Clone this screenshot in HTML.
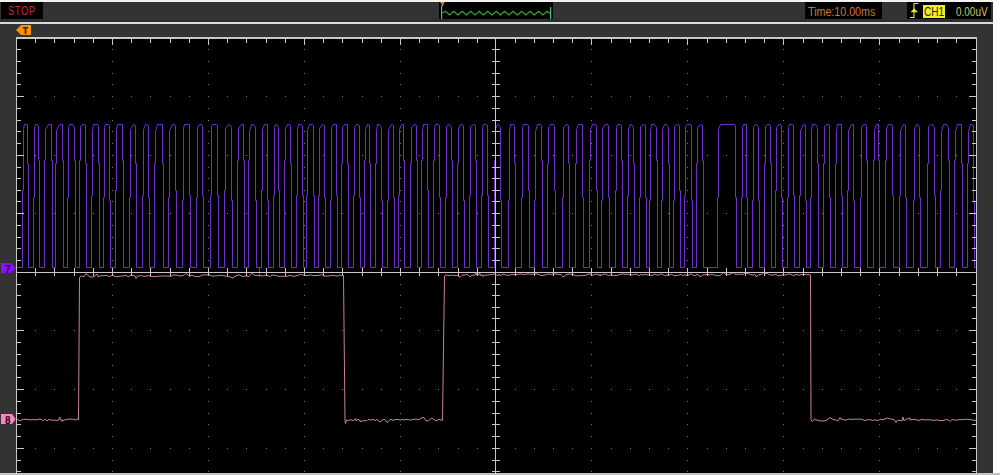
<!DOCTYPE html>
<html><head><meta charset="utf-8"><style>
html,body{margin:0;padding:0;width:1000px;height:475px;overflow:hidden;background:#333;}
.t{position:absolute;font-family:"Liberation Sans",sans-serif;font-size:11px;line-height:11px;white-space:nowrap;}
</style></head><body>
<svg width="1000" height="475" viewBox="0 0 1000 475" style="position:absolute;left:0;top:0">
<rect x="0" y="0" width="1000" height="475" fill="#333333"/>
<rect x="0" y="0" width="1000" height="2" fill="#f2f2f2"/>
<rect x="0" y="22" width="993" height="2" fill="#dadada"/>
<rect x="0" y="20" width="993" height="2" fill="#2c2c2c"/>
<rect x="993" y="0" width="7" height="475" fill="#ffffff"/>
<rect x="0" y="473" width="1000" height="2" fill="#c4c4c4"/>
<rect x="1" y="2" width="42" height="17" fill="#000"/>
<rect x="439" y="2" width="114" height="17" fill="#000"/>
<rect x="805" y="2" width="77" height="17" fill="#000"/>
<rect x="907" y="2" width="84" height="17" fill="#000"/>
<rect x="17" y="39" width="959" height="434" fill="#000"/>
<path d="M35 96h1v1h-1zM54 96h1v1h-1zM74 96h1v1h-1zM93 96h1v1h-1zM131 96h1v1h-1zM150 96h1v1h-1zM170 96h1v1h-1zM189 96h1v1h-1zM227 96h1v1h-1zM246 96h1v1h-1zM266 96h1v1h-1zM285 96h1v1h-1zM323 96h1v1h-1zM342 96h1v1h-1zM362 96h1v1h-1zM381 96h1v1h-1zM419 96h1v1h-1zM438 96h1v1h-1zM458 96h1v1h-1zM477 96h1v1h-1zM515 96h1v1h-1zM534 96h1v1h-1zM553 96h1v1h-1zM572 96h1v1h-1zM611 96h1v1h-1zM630 96h1v1h-1zM649 96h1v1h-1zM668 96h1v1h-1zM707 96h1v1h-1zM726 96h1v1h-1zM745 96h1v1h-1zM764 96h1v1h-1zM803 96h1v1h-1zM822 96h1v1h-1zM841 96h1v1h-1zM860 96h1v1h-1zM899 96h1v1h-1zM918 96h1v1h-1zM937 96h1v1h-1zM956 96h1v1h-1zM35 155h1v1h-1zM54 155h1v1h-1zM74 155h1v1h-1zM93 155h1v1h-1zM131 155h1v1h-1zM150 155h1v1h-1zM170 155h1v1h-1zM189 155h1v1h-1zM227 155h1v1h-1zM246 155h1v1h-1zM266 155h1v1h-1zM285 155h1v1h-1zM323 155h1v1h-1zM342 155h1v1h-1zM362 155h1v1h-1zM381 155h1v1h-1zM419 155h1v1h-1zM438 155h1v1h-1zM458 155h1v1h-1zM477 155h1v1h-1zM515 155h1v1h-1zM534 155h1v1h-1zM553 155h1v1h-1zM572 155h1v1h-1zM611 155h1v1h-1zM630 155h1v1h-1zM649 155h1v1h-1zM668 155h1v1h-1zM707 155h1v1h-1zM726 155h1v1h-1zM745 155h1v1h-1zM764 155h1v1h-1zM803 155h1v1h-1zM822 155h1v1h-1zM841 155h1v1h-1zM860 155h1v1h-1zM899 155h1v1h-1zM918 155h1v1h-1zM937 155h1v1h-1zM956 155h1v1h-1zM35 213h1v1h-1zM54 213h1v1h-1zM74 213h1v1h-1zM93 213h1v1h-1zM131 213h1v1h-1zM150 213h1v1h-1zM170 213h1v1h-1zM189 213h1v1h-1zM227 213h1v1h-1zM246 213h1v1h-1zM266 213h1v1h-1zM285 213h1v1h-1zM323 213h1v1h-1zM342 213h1v1h-1zM362 213h1v1h-1zM381 213h1v1h-1zM419 213h1v1h-1zM438 213h1v1h-1zM458 213h1v1h-1zM477 213h1v1h-1zM515 213h1v1h-1zM534 213h1v1h-1zM553 213h1v1h-1zM572 213h1v1h-1zM611 213h1v1h-1zM630 213h1v1h-1zM649 213h1v1h-1zM668 213h1v1h-1zM707 213h1v1h-1zM726 213h1v1h-1zM745 213h1v1h-1zM764 213h1v1h-1zM803 213h1v1h-1zM822 213h1v1h-1zM841 213h1v1h-1zM860 213h1v1h-1zM899 213h1v1h-1zM918 213h1v1h-1zM937 213h1v1h-1zM956 213h1v1h-1zM35 330h1v1h-1zM54 330h1v1h-1zM74 330h1v1h-1zM93 330h1v1h-1zM131 330h1v1h-1zM150 330h1v1h-1zM170 330h1v1h-1zM189 330h1v1h-1zM227 330h1v1h-1zM246 330h1v1h-1zM266 330h1v1h-1zM285 330h1v1h-1zM323 330h1v1h-1zM342 330h1v1h-1zM362 330h1v1h-1zM381 330h1v1h-1zM419 330h1v1h-1zM438 330h1v1h-1zM458 330h1v1h-1zM477 330h1v1h-1zM515 330h1v1h-1zM534 330h1v1h-1zM553 330h1v1h-1zM572 330h1v1h-1zM611 330h1v1h-1zM630 330h1v1h-1zM649 330h1v1h-1zM668 330h1v1h-1zM707 330h1v1h-1zM726 330h1v1h-1zM745 330h1v1h-1zM764 330h1v1h-1zM803 330h1v1h-1zM822 330h1v1h-1zM841 330h1v1h-1zM860 330h1v1h-1zM899 330h1v1h-1zM918 330h1v1h-1zM937 330h1v1h-1zM956 330h1v1h-1zM35 389h1v1h-1zM54 389h1v1h-1zM74 389h1v1h-1zM93 389h1v1h-1zM131 389h1v1h-1zM150 389h1v1h-1zM170 389h1v1h-1zM189 389h1v1h-1zM227 389h1v1h-1zM246 389h1v1h-1zM266 389h1v1h-1zM285 389h1v1h-1zM323 389h1v1h-1zM342 389h1v1h-1zM362 389h1v1h-1zM381 389h1v1h-1zM419 389h1v1h-1zM438 389h1v1h-1zM458 389h1v1h-1zM477 389h1v1h-1zM515 389h1v1h-1zM534 389h1v1h-1zM553 389h1v1h-1zM572 389h1v1h-1zM611 389h1v1h-1zM630 389h1v1h-1zM649 389h1v1h-1zM668 389h1v1h-1zM707 389h1v1h-1zM726 389h1v1h-1zM745 389h1v1h-1zM764 389h1v1h-1zM803 389h1v1h-1zM822 389h1v1h-1zM841 389h1v1h-1zM860 389h1v1h-1zM899 389h1v1h-1zM918 389h1v1h-1zM937 389h1v1h-1zM956 389h1v1h-1zM35 448h1v1h-1zM54 448h1v1h-1zM74 448h1v1h-1zM93 448h1v1h-1zM131 448h1v1h-1zM150 448h1v1h-1zM170 448h1v1h-1zM189 448h1v1h-1zM227 448h1v1h-1zM246 448h1v1h-1zM266 448h1v1h-1zM285 448h1v1h-1zM323 448h1v1h-1zM342 448h1v1h-1zM362 448h1v1h-1zM381 448h1v1h-1zM419 448h1v1h-1zM438 448h1v1h-1zM458 448h1v1h-1zM477 448h1v1h-1zM515 448h1v1h-1zM534 448h1v1h-1zM553 448h1v1h-1zM572 448h1v1h-1zM611 448h1v1h-1zM630 448h1v1h-1zM649 448h1v1h-1zM668 448h1v1h-1zM707 448h1v1h-1zM726 448h1v1h-1zM745 448h1v1h-1zM764 448h1v1h-1zM803 448h1v1h-1zM822 448h1v1h-1zM841 448h1v1h-1zM860 448h1v1h-1zM899 448h1v1h-1zM918 448h1v1h-1zM937 448h1v1h-1zM956 448h1v1h-1zM112 49h1v1h-1zM112 61h1v1h-1zM112 73h1v1h-1zM112 84h1v1h-1zM112 108h1v1h-1zM112 120h1v1h-1zM112 131h1v1h-1zM112 143h1v1h-1zM112 167h1v1h-1zM112 178h1v1h-1zM112 190h1v1h-1zM112 201h1v1h-1zM112 225h1v1h-1zM112 237h1v1h-1zM112 248h1v1h-1zM112 260h1v1h-1zM112 284h1v1h-1zM112 295h1v1h-1zM112 307h1v1h-1zM112 318h1v1h-1zM112 342h1v1h-1zM112 354h1v1h-1zM112 365h1v1h-1zM112 377h1v1h-1zM112 401h1v1h-1zM112 413h1v1h-1zM112 424h1v1h-1zM112 436h1v1h-1zM112 460h1v1h-1zM112 471h1v1h-1zM112 96h1v1h-1zM112 155h1v1h-1zM112 213h1v1h-1zM112 330h1v1h-1zM112 389h1v1h-1zM112 448h1v1h-1zM208 49h1v1h-1zM208 61h1v1h-1zM208 73h1v1h-1zM208 84h1v1h-1zM208 108h1v1h-1zM208 120h1v1h-1zM208 131h1v1h-1zM208 143h1v1h-1zM208 167h1v1h-1zM208 178h1v1h-1zM208 190h1v1h-1zM208 201h1v1h-1zM208 225h1v1h-1zM208 237h1v1h-1zM208 248h1v1h-1zM208 260h1v1h-1zM208 284h1v1h-1zM208 295h1v1h-1zM208 307h1v1h-1zM208 318h1v1h-1zM208 342h1v1h-1zM208 354h1v1h-1zM208 365h1v1h-1zM208 377h1v1h-1zM208 401h1v1h-1zM208 413h1v1h-1zM208 424h1v1h-1zM208 436h1v1h-1zM208 460h1v1h-1zM208 471h1v1h-1zM208 96h1v1h-1zM208 155h1v1h-1zM208 213h1v1h-1zM208 330h1v1h-1zM208 389h1v1h-1zM208 448h1v1h-1zM304 49h1v1h-1zM304 61h1v1h-1zM304 73h1v1h-1zM304 84h1v1h-1zM304 108h1v1h-1zM304 120h1v1h-1zM304 131h1v1h-1zM304 143h1v1h-1zM304 167h1v1h-1zM304 178h1v1h-1zM304 190h1v1h-1zM304 201h1v1h-1zM304 225h1v1h-1zM304 237h1v1h-1zM304 248h1v1h-1zM304 260h1v1h-1zM304 284h1v1h-1zM304 295h1v1h-1zM304 307h1v1h-1zM304 318h1v1h-1zM304 342h1v1h-1zM304 354h1v1h-1zM304 365h1v1h-1zM304 377h1v1h-1zM304 401h1v1h-1zM304 413h1v1h-1zM304 424h1v1h-1zM304 436h1v1h-1zM304 460h1v1h-1zM304 471h1v1h-1zM304 96h1v1h-1zM304 155h1v1h-1zM304 213h1v1h-1zM304 330h1v1h-1zM304 389h1v1h-1zM304 448h1v1h-1zM400 49h1v1h-1zM400 61h1v1h-1zM400 73h1v1h-1zM400 84h1v1h-1zM400 108h1v1h-1zM400 120h1v1h-1zM400 131h1v1h-1zM400 143h1v1h-1zM400 167h1v1h-1zM400 178h1v1h-1zM400 190h1v1h-1zM400 201h1v1h-1zM400 225h1v1h-1zM400 237h1v1h-1zM400 248h1v1h-1zM400 260h1v1h-1zM400 284h1v1h-1zM400 295h1v1h-1zM400 307h1v1h-1zM400 318h1v1h-1zM400 342h1v1h-1zM400 354h1v1h-1zM400 365h1v1h-1zM400 377h1v1h-1zM400 401h1v1h-1zM400 413h1v1h-1zM400 424h1v1h-1zM400 436h1v1h-1zM400 460h1v1h-1zM400 471h1v1h-1zM400 96h1v1h-1zM400 155h1v1h-1zM400 213h1v1h-1zM400 330h1v1h-1zM400 389h1v1h-1zM400 448h1v1h-1zM591 49h1v1h-1zM591 61h1v1h-1zM591 73h1v1h-1zM591 84h1v1h-1zM591 108h1v1h-1zM591 120h1v1h-1zM591 131h1v1h-1zM591 143h1v1h-1zM591 167h1v1h-1zM591 178h1v1h-1zM591 190h1v1h-1zM591 201h1v1h-1zM591 225h1v1h-1zM591 237h1v1h-1zM591 248h1v1h-1zM591 260h1v1h-1zM591 284h1v1h-1zM591 295h1v1h-1zM591 307h1v1h-1zM591 318h1v1h-1zM591 342h1v1h-1zM591 354h1v1h-1zM591 365h1v1h-1zM591 377h1v1h-1zM591 401h1v1h-1zM591 413h1v1h-1zM591 424h1v1h-1zM591 436h1v1h-1zM591 460h1v1h-1zM591 471h1v1h-1zM591 96h1v1h-1zM591 155h1v1h-1zM591 213h1v1h-1zM591 330h1v1h-1zM591 389h1v1h-1zM591 448h1v1h-1zM687 49h1v1h-1zM687 61h1v1h-1zM687 73h1v1h-1zM687 84h1v1h-1zM687 108h1v1h-1zM687 120h1v1h-1zM687 131h1v1h-1zM687 143h1v1h-1zM687 167h1v1h-1zM687 178h1v1h-1zM687 190h1v1h-1zM687 201h1v1h-1zM687 225h1v1h-1zM687 237h1v1h-1zM687 248h1v1h-1zM687 260h1v1h-1zM687 284h1v1h-1zM687 295h1v1h-1zM687 307h1v1h-1zM687 318h1v1h-1zM687 342h1v1h-1zM687 354h1v1h-1zM687 365h1v1h-1zM687 377h1v1h-1zM687 401h1v1h-1zM687 413h1v1h-1zM687 424h1v1h-1zM687 436h1v1h-1zM687 460h1v1h-1zM687 471h1v1h-1zM687 96h1v1h-1zM687 155h1v1h-1zM687 213h1v1h-1zM687 330h1v1h-1zM687 389h1v1h-1zM687 448h1v1h-1zM783 49h1v1h-1zM783 61h1v1h-1zM783 73h1v1h-1zM783 84h1v1h-1zM783 108h1v1h-1zM783 120h1v1h-1zM783 131h1v1h-1zM783 143h1v1h-1zM783 167h1v1h-1zM783 178h1v1h-1zM783 190h1v1h-1zM783 201h1v1h-1zM783 225h1v1h-1zM783 237h1v1h-1zM783 248h1v1h-1zM783 260h1v1h-1zM783 284h1v1h-1zM783 295h1v1h-1zM783 307h1v1h-1zM783 318h1v1h-1zM783 342h1v1h-1zM783 354h1v1h-1zM783 365h1v1h-1zM783 377h1v1h-1zM783 401h1v1h-1zM783 413h1v1h-1zM783 424h1v1h-1zM783 436h1v1h-1zM783 460h1v1h-1zM783 471h1v1h-1zM783 96h1v1h-1zM783 155h1v1h-1zM783 213h1v1h-1zM783 330h1v1h-1zM783 389h1v1h-1zM783 448h1v1h-1zM879 49h1v1h-1zM879 61h1v1h-1zM879 73h1v1h-1zM879 84h1v1h-1zM879 108h1v1h-1zM879 120h1v1h-1zM879 131h1v1h-1zM879 143h1v1h-1zM879 167h1v1h-1zM879 178h1v1h-1zM879 190h1v1h-1zM879 201h1v1h-1zM879 225h1v1h-1zM879 237h1v1h-1zM879 248h1v1h-1zM879 260h1v1h-1zM879 284h1v1h-1zM879 295h1v1h-1zM879 307h1v1h-1zM879 318h1v1h-1zM879 342h1v1h-1zM879 354h1v1h-1zM879 365h1v1h-1zM879 377h1v1h-1zM879 401h1v1h-1zM879 413h1v1h-1zM879 424h1v1h-1zM879 436h1v1h-1zM879 460h1v1h-1zM879 471h1v1h-1zM879 96h1v1h-1zM879 155h1v1h-1zM879 213h1v1h-1zM879 330h1v1h-1zM879 389h1v1h-1zM879 448h1v1h-1z" fill="#7a7a7a"/>
<path d="M17 267.5H22.5V190.5H23.5V129.5L24.5 124.5H27.5L27.5 124.5V163.5H28.5V267.5H33.5V197.5H34.5V128.5L35.5 124.5H37.5L38.5 126.0V160.5H39.5V267.5H44.5V160.5H45.5V129.5L48.5 124.5H51.5L51.5 124.5V160.5H52.5V267.5H55.5V163.5H56.5V130.5L59.5 124.5H62.5L62.5 124.5V160.5H63.5V267.5H67.5V197.5H68.5V127.5L69.5 124.5H72.5L74.5 127.5V160.5H75.5V267.5H79.5V160.5H80.5V126.5L82.5 124.5H84.5L85.5 126.0V163.5H86.5V267.5H91.5V195.5H92.5V130.5L93.5 124.5H97.5L98.5 126.0V163.5H99.5V267.5H103.5V197.5H104.5V127.5L105.5 124.5H108.5L109.5 126.0V200.5H110.5V267.5H115.5V190.5H116.5V130.5L117.5 124.5H122.5L122.5 124.5V160.5H123.5V267.5H129.5V197.5H130.5V129.5L133.5 124.5H134.5L135.5 126.0V163.5H136.5V267.5H142.5V195.5H143.5V129.5L145.5 124.5H147.5L148.5 126.0V197.5H149.5V267.5H154.5V163.5H155.5V131.5L157.5 124.5H162.5L162.5 124.5V163.5H163.5V267.5H168.5V197.5H169.5V130.5L172.5 124.5H174.5L175.5 126.0V190.5H176.5V267.5H182.5V200.5H183.5V128.5L184.5 124.5H189.5L189.5 124.5V195.5H190.5V267.5H196.5V197.5H197.5V127.5L199.5 124.5H201.5L202.5 126.0V195.5H203.5V267.5H210.5V195.5H211.5V126.5L212.5 124.5H216.5L217.5 126.0V195.5H218.5V267.5H224.5V190.5H225.5V128.5L228.5 124.5H229.5L231.5 127.5V200.5H232.5V267.5H237.5V160.5H238.5V128.5L241.5 124.5H243.5L243.5 124.5V160.5H244.5V267.5H248.5V160.5H249.5V131.5L251.5 124.5H253.5L255.5 127.5V200.5H256.5V267.5H261.5V190.5H262.5V129.5L264.5 124.5H267.5L267.5 124.5V200.5H268.5V267.5H273.5V195.5H274.5V127.5L275.5 124.5H276.5L278.5 127.5V190.5H279.5V267.5H284.5V160.5H285.5V128.5L287.5 124.5H289.5L290.5 126.0V163.5H291.5V267.5H296.5V195.5H297.5V129.5L298.5 124.5H301.5L302.5 126.0V195.5H303.5V267.5H306.5V195.5H307.5V130.5L309.5 124.5H312.5L313.5 126.0V195.5H314.5V267.5H318.5V195.5H319.5V128.5L322.5 124.5H323.5L324.5 126.0V197.5H325.5V267.5H330.5V200.5H331.5V127.5L333.5 124.5H336.5L336.5 124.5V195.5H337.5V267.5H341.5V163.5H342.5V127.5L344.5 124.5H347.5L347.5 124.5V163.5H348.5V267.5H353.5V195.5H354.5V127.5L356.5 124.5H358.5L359.5 126.0V197.5H360.5V267.5H364.5V160.5H365.5V129.5L367.5 124.5H368.5L369.5 126.0V163.5H370.5V267.5H375.5V163.5H376.5V130.5L377.5 124.5H379.5L381.5 127.5V200.5H382.5V267.5H387.5V200.5H388.5V129.5L391.5 124.5H392.5L393.5 126.0V197.5H394.5V267.5H398.5V195.5H399.5V129.5L401.5 124.5H403.5L403.5 124.5V160.5H404.5V267.5H410.5V163.5H411.5V127.5L414.5 124.5H415.5L416.5 126.0V160.5H417.5V267.5H421.5V160.5H422.5V130.5L423.5 124.5H427.5L427.5 124.5V190.5H428.5V267.5H433.5V160.5H434.5V127.5L435.5 124.5H438.5L439.5 126.0V197.5H440.5V267.5H445.5V197.5H446.5V126.5L448.5 124.5H449.5L451.5 127.5V160.5H452.5V267.5H457.5V163.5H458.5V128.5L460.5 124.5H462.5L463.5 126.0V200.5H464.5V267.5H469.5V195.5H470.5V126.5L473.5 124.5H474.5L475.5 126.0V160.5H476.5V267.5H481.5V195.5H482.5V128.5L483.5 124.5H486.5L487.5 126.0V195.5H488.5V267.5H494.5V160.5H495.5V128.5L497.5 124.5H498.5L500.5 127.5V200.5H501.5V267.5H508.5V200.5H509.5V130.5L510.5 124.5H513.5L514.5 126.0V163.5H515.5V267.5H521.5V197.5H522.5V127.5L523.5 124.5H527.5L528.5 126.0V190.5H529.5V267.5H534.5V200.5H535.5V131.5L537.5 124.5H540.5L541.5 126.0V160.5H542.5V267.5H547.5V163.5H548.5V127.5L550.5 124.5H553.5L554.5 126.0V190.5H555.5V267.5H562.5V197.5H563.5V127.5L566.5 124.5H567.5L568.5 126.0V163.5H569.5V267.5H575.5V163.5H576.5V129.5L578.5 124.5H582.5L582.5 124.5V197.5H583.5V267.5H589.5V160.5H590.5V129.5L592.5 124.5H595.5L596.5 126.0V190.5H597.5V267.5H601.5V200.5H602.5V128.5L605.5 124.5H607.5L608.5 126.0V197.5H609.5V267.5H615.5V190.5H616.5V127.5L617.5 124.5H620.5L621.5 126.0V160.5H622.5V267.5H627.5V195.5H628.5V128.5L630.5 124.5H631.5L633.5 127.5V163.5H634.5V267.5H639.5V197.5H640.5V126.5L643.5 124.5H644.5L645.5 126.0V197.5H646.5V267.5H649.5V200.5H650.5V131.5L651.5 124.5H654.5L656.5 127.5V160.5H657.5V267.5H661.5V200.5H662.5V129.5L664.5 124.5H666.5L668.5 127.5V163.5H669.5V267.5H673.5V200.5H674.5V126.5L677.5 124.5H678.5L679.5 126.0V190.5H680.5V267.5H684.5V195.5H685.5V126.5L687.5 124.5H690.5L691.5 126.0V200.5H692.5V267.5H696.5V163.5H697.5V127.5L700.5 124.5H701.5L702.5 126.0V160.5H703.5V267.5H717.5V197.5H718.5V129.5L720.5 124.5H734.5L735.5 126.0V197.5H736.5V267.5H741.5V197.5H742.5V127.5L743.5 124.5H746.5L746.5 124.5V197.5H747.5V267.5H752.5V200.5H753.5V126.5L755.5 124.5H756.5L758.5 127.5V200.5H759.5V267.5H764.5V163.5H765.5V126.5L767.5 124.5H769.5L770.5 126.0V163.5H771.5V267.5H775.5V190.5H776.5V127.5L778.5 124.5H780.5L781.5 126.0V197.5H782.5V267.5H787.5V197.5H788.5V127.5L789.5 124.5H792.5L793.5 126.0V195.5H794.5V267.5H799.5V195.5H800.5V130.5L803.5 124.5H804.5L805.5 126.0V200.5H806.5V267.5H810.5V197.5H811.5V130.5L812.5 124.5H815.5L817.5 127.5V163.5H818.5V267.5H823.5V163.5H824.5V126.5L826.5 124.5H828.5L829.5 126.0V197.5H830.5V267.5H835.5V163.5H836.5V130.5L837.5 124.5H841.5L841.5 124.5V195.5H842.5V267.5H847.5V190.5H848.5V130.5L851.5 124.5H853.5L853.5 124.5V200.5H854.5V267.5H860.5V197.5H861.5V127.5L863.5 124.5H865.5L866.5 126.0V160.5H867.5V267.5H873.5V160.5H874.5V130.5L876.5 124.5H878.5L878.5 124.5V160.5H879.5V267.5H885.5V160.5H886.5V128.5L888.5 124.5H891.5L892.5 126.0V195.5H893.5V267.5H899.5V195.5H900.5V130.5L903.5 124.5H904.5L905.5 126.0V197.5H906.5V267.5H913.5V200.5H914.5V128.5L916.5 124.5H917.5L919.5 127.5V197.5H920.5V267.5H927.5V163.5H928.5V126.5L931.5 124.5H932.5L934.5 127.5V195.5H935.5V267.5H940.5V190.5H941.5V131.5L943.5 124.5H946.5L948.5 127.5V160.5H949.5V267.5H954.5V160.5H955.5V131.5L957.5 124.5H961.5L961.5 124.5V163.5H962.5V267.5H967.5V163.5H968.5V131.5L970.5 124.5H972.5L973.5 126.0V200.5H974.5V267.5H976M259.5 267.5V277" fill="none" stroke="#6e30c8" stroke-width="1"/>
<path d="M17.0 419.3 L20.0 420.9 L23.0 419.3 L27.0 419.3 L30.0 419.8 L33.0 419.6 L37.0 419.7 L40.0 419.0 L42.0 419.6 L43.0 420.8 L45.0 419.2 L47.0 420.8 L49.0 419.3 L52.0 420.4 L54.0 420.1 L57.0 420.4 L58.0 420.6 L60.0 417.0 L60.0 419.1 L61.0 420.6 L62.0 419.4 L62.0 421.5 L64.0 419.9 L66.0 419.8 L68.0 419.1 L72.0 419.2 L74.0 419.4 L76.0 420.1 L78.0 418.5 L78.5 420.0 L79.5 278.0 L80.5 276.3 L82.0 276.1 L84.0 276.7 L86.0 273.6 L90.0 277.0 L93.0 277.0 L94.0 276.4 L97.0 274.1 L98.0 276.7 L101.0 275.7 L103.0 275.7 L107.0 275.3 L109.0 276.7 L110.0 276.5 L112.0 275.1 L116.0 276.8 L120.0 276.2 L124.0 275.9 L126.0 275.0 L128.0 276.9 L131.0 275.1 L133.0 275.4 L135.0 275.9 L136.0 278.5 L138.0 275.5 L139.0 276.6 L141.0 275.1 L142.0 276.2 L143.0 276.0 L145.0 276.4 L148.0 275.6 L151.0 276.4 L155.0 276.6 L159.0 276.2 L163.0 275.9 L166.0 276.0 L167.0 276.1 L171.0 276.3 L173.0 275.0 L177.0 275.1 L180.0 276.1 L184.0 275.4 L186.0 273.4 L190.0 276.7 L191.0 275.0 L195.0 276.5 L197.0 276.4 L199.0 276.8 L202.0 275.0 L206.0 274.9 L210.0 275.0 L212.0 276.1 L216.0 275.9 L217.0 275.8 L221.0 275.2 L224.0 275.8 L227.0 276.3 L230.0 276.7 L233.0 278.3 L234.0 276.7 L237.0 275.5 L239.0 274.9 L243.0 276.6 L245.0 276.0 L247.0 276.1 L249.0 276.5 L252.0 273.2 L255.0 275.5 L259.0 275.4 L261.0 275.4 L263.0 276.4 L264.0 275.1 L265.0 275.3 L267.0 275.5 L270.0 276.5 L272.0 275.2 L273.0 275.2 L275.0 275.2 L278.0 276.2 L281.0 276.3 L285.0 276.4 L288.0 276.1 L289.0 275.4 L292.0 275.9 L294.0 276.4 L297.0 275.6 L299.0 275.1 L300.0 274.1 L303.0 275.1 L307.0 275.6 L311.0 274.9 L313.0 275.6 L316.0 275.5 L318.0 275.5 L320.0 275.0 L322.0 274.7 L324.0 276.2 L326.0 276.0 L329.0 276.0 L331.0 275.2 L332.0 275.7 L334.0 275.5 L338.0 276.2 L339.0 275.0 L342.0 275.4 L343.5 275.5 L345.0 420.5 L345.5 423.5 L346.5 420.0 L348.0 420.7 L349.0 419.9 L352.0 420.0 L353.0 420.9 L356.0 418.5 L356.0 420.9 L358.0 419.4 L360.0 420.4 L360.0 421.5 L364.0 420.7 L367.0 420.6 L368.0 419.5 L369.0 419.6 L371.0 420.1 L374.0 419.2 L375.0 420.9 L377.0 419.4 L380.0 422.0 L383.0 419.6 L385.0 419.5 L387.0 422.5 L391.0 419.1 L393.0 420.3 L396.0 419.5 L399.0 419.5 L400.0 420.4 L402.0 419.4 L404.0 420.0 L406.0 419.4 L408.0 419.4 L410.0 420.2 L413.0 419.4 L416.0 419.1 L419.0 419.8 L421.0 418.0 L424.0 417.5 L426.0 420.8 L428.0 421.0 L430.0 419.4 L432.0 418.0 L433.0 419.1 L436.0 420.8 L437.0 420.7 L439.0 419.2 L440.0 419.7 L442.5 420.5 L444.5 276.0 L446.0 274.8 L447.0 275.3 L450.0 275.4 L453.0 275.2 L455.0 275.6 L457.0 275.3 L460.0 277.3 L462.0 275.3 L463.0 274.7 L464.0 275.3 L467.0 274.3 L470.0 276.8 L472.0 275.2 L475.0 275.1 L476.0 272.8 L477.0 275.7 L480.0 273.3 L480.0 275.6 L483.0 274.8 L483.0 276.6 L484.0 275.3 L488.0 275.0 L490.0 274.7 L493.0 274.2 L495.0 273.9 L496.0 274.9 L498.0 275.6 L499.0 274.0 L500.0 275.8 L503.0 274.1 L506.0 275.1 L510.0 275.3 L511.0 274.4 L513.0 274.5 L517.0 274.7 L519.0 274.1 L522.0 273.9 L524.0 274.8 L526.0 274.0 L529.0 274.0 L532.0 274.3 L535.0 273.9 L537.0 273.9 L540.0 275.0 L541.0 275.5 L544.0 275.3 L548.0 274.0 L551.0 274.5 L552.0 274.1 L554.0 273.9 L558.0 274.2 L559.0 274.6 L561.0 274.4 L563.0 277.3 L566.0 274.6 L569.0 274.1 L572.0 274.1 L576.0 275.8 L580.0 275.7 L582.0 275.6 L585.0 275.5 L587.0 274.6 L590.0 273.8 L592.0 275.4 L595.0 274.5 L597.0 273.9 L599.0 275.6 L600.0 273.8 L600.0 275.7 L604.0 274.1 L606.0 274.1 L607.0 274.8 L609.0 275.5 L610.0 274.8 L611.0 275.1 L612.0 275.0 L614.0 275.5 L617.0 275.5 L620.0 274.2 L623.0 274.1 L625.0 274.3 L629.0 274.2 L632.0 275.1 L636.0 274.0 L639.0 275.5 L641.0 274.4 L643.0 275.1 L646.0 274.2 L647.0 274.8 L649.0 275.0 L652.0 275.4 L655.0 274.1 L658.0 275.4 L661.0 273.9 L665.0 275.6 L667.0 274.8 L668.0 275.6 L672.0 274.1 L673.0 275.3 L674.0 275.8 L677.0 275.4 L679.0 275.2 L681.0 274.5 L683.0 275.6 L685.0 274.7 L687.0 275.6 L689.0 275.0 L691.0 273.9 L693.0 275.1 L695.0 275.6 L697.0 274.3 L700.0 276.0 L700.0 276.8 L703.0 275.0 L704.0 274.9 L707.0 274.5 L710.0 275.0 L712.0 274.0 L714.0 275.3 L715.0 274.8 L717.0 275.8 L720.0 275.6 L724.0 272.3 L726.0 275.0 L729.0 274.5 L730.0 274.3 L734.0 272.3 L735.0 274.4 L738.0 274.2 L741.0 274.1 L743.0 274.7 L745.0 272.8 L749.0 274.0 L753.0 275.1 L755.0 274.3 L756.0 276.8 L759.0 274.7 L762.0 274.3 L763.0 272.3 L766.0 274.1 L767.0 272.8 L769.0 274.8 L773.0 275.1 L776.0 274.4 L778.0 275.8 L782.0 275.2 L783.0 274.7 L786.0 275.1 L788.0 274.0 L790.0 274.0 L794.0 275.7 L796.0 274.3 L799.0 275.2 L802.0 274.4 L804.0 274.8 L806.0 274.3 L810.5 275.0 L811.0 420.0 L812.5 421.5 L814.0 419.3 L816.0 419.8 L819.0 420.8 L823.0 421.0 L826.0 420.7 L830.0 417.5 L833.0 419.5 L835.0 419.8 L838.0 420.8 L840.0 417.5 L841.0 419.3 L843.0 419.1 L845.0 420.3 L849.0 419.1 L852.0 419.4 L855.0 419.1 L859.0 419.2 L861.0 419.1 L865.0 420.5 L869.0 419.2 L870.0 420.3 L872.0 419.8 L873.0 420.9 L874.0 419.7 L876.0 420.2 L879.0 420.2 L880.0 419.1 L883.0 419.7 L887.0 418.0 L891.0 419.2 L893.0 419.0 L895.0 420.5 L896.0 422.5 L897.0 420.6 L899.0 420.2 L902.0 420.9 L903.0 417.0 L904.0 420.9 L906.0 419.2 L910.0 418.0 L910.0 420.0 L914.0 419.2 L916.0 419.8 L919.0 420.5 L922.0 419.1 L924.0 419.9 L927.0 419.8 L931.0 419.9 L934.0 420.4 L937.0 419.7 L939.0 420.7 L942.0 420.5 L944.0 420.4 L946.0 419.3 L949.0 420.4 L950.0 421.5 L952.0 419.6 L956.0 420.2 L960.0 419.5 L962.0 419.7 L964.0 419.4 L968.0 419.3 L972.0 419.8 L974.0 420.5 L976.0 420.0" fill="none" stroke="#c8809a" stroke-width="1"/>
<rect x="16" y="37" width="1" height="436" fill="#c8c8c8"/>
<rect x="976" y="37" width="1" height="436" fill="#c8c8c8"/>
<rect x="16" y="37" width="961" height="2" fill="#c8c8c8"/>
<rect x="16" y="272" width="960" height="1" fill="#c8c8c8"/>
<rect x="495" y="37" width="1" height="436" fill="#c8c8c8"/>
<path d="M35 39h1v4h-1zM54 39h1v4h-1zM74 39h1v4h-1zM93 39h1v4h-1zM131 39h1v4h-1zM150 39h1v4h-1zM170 39h1v4h-1zM189 39h1v4h-1zM227 39h1v4h-1zM246 39h1v4h-1zM266 39h1v4h-1zM285 39h1v4h-1zM323 39h1v4h-1zM342 39h1v4h-1zM362 39h1v4h-1zM381 39h1v4h-1zM419 39h1v4h-1zM438 39h1v4h-1zM458 39h1v4h-1zM477 39h1v4h-1zM515 39h1v4h-1zM534 39h1v4h-1zM553 39h1v4h-1zM572 39h1v4h-1zM611 39h1v4h-1zM630 39h1v4h-1zM649 39h1v4h-1zM668 39h1v4h-1zM707 39h1v4h-1zM726 39h1v4h-1zM745 39h1v4h-1zM764 39h1v4h-1zM803 39h1v4h-1zM822 39h1v4h-1zM841 39h1v4h-1zM860 39h1v4h-1zM899 39h1v4h-1zM918 39h1v4h-1zM937 39h1v4h-1zM956 39h1v4h-1zM112 39h1v6h-1zM208 39h1v6h-1zM304 39h1v6h-1zM400 39h1v6h-1zM591 39h1v6h-1zM687 39h1v6h-1zM783 39h1v6h-1zM879 39h1v6h-1zM17 49h4v1h-4zM972 49h4v1h-4zM17 61h4v1h-4zM972 61h4v1h-4zM17 73h4v1h-4zM972 73h4v1h-4zM17 84h4v1h-4zM972 84h4v1h-4zM17 108h4v1h-4zM972 108h4v1h-4zM17 120h4v1h-4zM972 120h4v1h-4zM17 131h4v1h-4zM972 131h4v1h-4zM17 143h4v1h-4zM972 143h4v1h-4zM17 167h4v1h-4zM972 167h4v1h-4zM17 178h4v1h-4zM972 178h4v1h-4zM17 190h4v1h-4zM972 190h4v1h-4zM17 201h4v1h-4zM972 201h4v1h-4zM17 225h4v1h-4zM972 225h4v1h-4zM17 237h4v1h-4zM972 237h4v1h-4zM17 248h4v1h-4zM972 248h4v1h-4zM17 260h4v1h-4zM972 260h4v1h-4zM17 284h4v1h-4zM972 284h4v1h-4zM17 295h4v1h-4zM972 295h4v1h-4zM17 307h4v1h-4zM972 307h4v1h-4zM17 318h4v1h-4zM972 318h4v1h-4zM17 342h4v1h-4zM972 342h4v1h-4zM17 354h4v1h-4zM972 354h4v1h-4zM17 365h4v1h-4zM972 365h4v1h-4zM17 377h4v1h-4zM972 377h4v1h-4zM17 401h4v1h-4zM972 401h4v1h-4zM17 413h4v1h-4zM972 413h4v1h-4zM17 424h4v1h-4zM972 424h4v1h-4zM17 436h4v1h-4zM972 436h4v1h-4zM17 460h4v1h-4zM972 460h4v1h-4zM17 471h4v1h-4zM972 471h4v1h-4zM17 96h7v1h-7zM969 96h7v1h-7zM17 155h7v1h-7zM969 155h7v1h-7zM17 213h7v1h-7zM969 213h7v1h-7zM17 330h7v1h-7zM969 330h7v1h-7zM17 389h7v1h-7zM969 389h7v1h-7zM17 448h7v1h-7zM969 448h7v1h-7zM35 268h1v8h-1zM54 268h1v8h-1zM74 268h1v8h-1zM93 268h1v8h-1zM131 268h1v8h-1zM150 268h1v8h-1zM170 268h1v8h-1zM189 268h1v8h-1zM227 268h1v8h-1zM246 268h1v8h-1zM266 268h1v8h-1zM285 268h1v8h-1zM323 268h1v8h-1zM342 268h1v8h-1zM362 268h1v8h-1zM381 268h1v8h-1zM419 268h1v8h-1zM438 268h1v8h-1zM458 268h1v8h-1zM477 268h1v8h-1zM515 268h1v8h-1zM534 268h1v8h-1zM553 268h1v8h-1zM572 268h1v8h-1zM611 268h1v8h-1zM630 268h1v8h-1zM649 268h1v8h-1zM668 268h1v8h-1zM707 268h1v8h-1zM726 268h1v8h-1zM745 268h1v8h-1zM764 268h1v8h-1zM803 268h1v8h-1zM822 268h1v8h-1zM841 268h1v8h-1zM860 268h1v8h-1zM899 268h1v8h-1zM918 268h1v8h-1zM937 268h1v8h-1zM956 268h1v8h-1zM112 268h1v8h-1zM208 268h1v8h-1zM304 268h1v8h-1zM400 268h1v8h-1zM591 268h1v8h-1zM687 268h1v8h-1zM783 268h1v8h-1zM879 268h1v8h-1zM492 49h8v1h-8zM492 61h8v1h-8zM492 73h8v1h-8zM492 84h8v1h-8zM492 108h8v1h-8zM492 120h8v1h-8zM492 131h8v1h-8zM492 143h8v1h-8zM492 167h8v1h-8zM492 178h8v1h-8zM492 190h8v1h-8zM492 201h8v1h-8zM492 225h8v1h-8zM492 237h8v1h-8zM492 248h8v1h-8zM492 260h8v1h-8zM492 284h8v1h-8zM492 295h8v1h-8zM492 307h8v1h-8zM492 318h8v1h-8zM492 342h8v1h-8zM492 354h8v1h-8zM492 365h8v1h-8zM492 377h8v1h-8zM492 401h8v1h-8zM492 413h8v1h-8zM492 424h8v1h-8zM492 436h8v1h-8zM492 460h8v1h-8zM492 471h8v1h-8zM492 96h8v1h-8zM492 155h8v1h-8zM492 213h8v1h-8zM492 330h8v1h-8zM492 389h8v1h-8zM492 448h8v1h-8z" fill="#c8c8c8"/>
<!-- zigzag panel -->
<path d="M442.5 13L445.3 11.3L449.5 15L453.8 11.3L458.0 15L462.3 11.3L466.5 15L470.7 11.3L475.0 15L479.2 11.3L483.5 15L487.7 11.3L491.9 15L496.2 11.3L500.4 15L504.7 11.3L508.9 15L513.1 11.3L517.4 15L521.6 11.3L525.9 15L530.1 11.3L534.3 15L538.6 11.3L542.8 15L547.1 11.3L550 13.5" fill="none" stroke="#34a834" stroke-width="1.1"/>
<rect x="441" y="6" width="1.2" height="13" fill="#3cbca0"/>
<rect x="550" y="7" width="1.2" height="12" fill="#3cbca0"/>
<path d="M440 2h5l-1.6 2v2h-1.8v-2z" fill="#d08428"/>
<!-- trigger icon -->
<path d="M910 17.5H914V3.5H918.5" fill="none" stroke="#e0e040" stroke-width="1.1"/>
<path d="M910.5 12.3L914 8.3L918 12.3z" fill="#e6e63c"/>
<rect x="923" y="5" width="22" height="13" fill="#f0f020"/>
<!-- T marker -->
<path d="M16 30L21 25H31V35H21z" fill="#f89010"/>
<path d="M23 27h5v1.6h-1.7v5.4h-1.6v-5.4h-1.7z" fill="#4a1e00"/>
<!-- ch markers -->
<path d="M1 263H11L15.5 268L11 273H1z" fill="#8a10ff"/>
<path d="M1 414H12L15.5 419L12 424H1z" fill="#ff84c4"/>
</svg>
<div class="t" style="left:7.5px;top:5px;font-size:12px;line-height:12px;color:#c8262c;letter-spacing:0.7px;transform:scaleX(0.78);transform-origin:0 0">STOP</div>
<div class="t" style="left:808px;top:6px;font-size:12px;line-height:12px;color:#c87a3a;transform:scaleX(0.89);transform-origin:0 0">Time:10.00ms</div>
<div class="t" style="left:923.8px;top:6px;font-size:12px;line-height:12px;color:#262626;transform:scaleX(0.84);transform-origin:0 0">CH1</div>
<div class="t" style="left:955.5px;top:6px;font-size:12px;line-height:12px;color:#c8c86a;transform:scaleX(0.83);transform-origin:0 0">0.00uV</div>
<div class="t" style="left:5px;top:264px;color:#1a0040;font-size:10px;font-weight:bold">7</div>
<div class="t" style="left:5px;top:415px;color:#200010;font-size:10px;font-weight:bold">8</div>
</body></html>
